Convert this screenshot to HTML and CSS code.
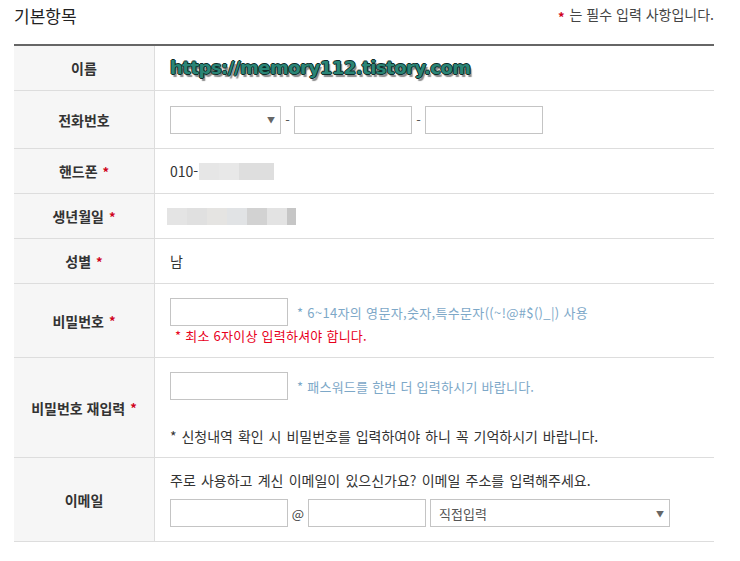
FILE: index.html
```html
<!DOCTYPE html>
<html lang="ko">
<head>
<meta charset="utf-8">
<title>기본항목</title>
<link rel="stylesheet" href="styles.css">
</head>
<body>
<div class="wrap">
  <div class="head">
    <h2 class="title">기본항목</h2>
    <p class="note"><span class="req">*</span> 는 필수 입력 사항입니다.</p>
  </div>
  <div class="form">
    <div class="row r-name">
      <div class="label">이름</div>
      <div class="value"><span class="wm">https://memory112.tistory.com</span></div>
    </div>
    <div class="row r-tel">
      <div class="label">전화번호</div>
      <div class="value">
        <div class="line">
          <div class="sel sel-tel"><span></span><span class="arrow">▼</span></div>
          <span class="dash">-</span>
          <div class="inp"></div>
          <span class="dash">-</span>
          <div class="inp"></div>
        </div>
      </div>
    </div>
    <div class="row r-short">
      <div class="label">핸드폰<span class="req">*</span></div>
      <div class="value"><div class="line"><span class="txt">010-</span><span class="blur blur-phone"></span></div></div>
    </div>
    <div class="row r-short">
      <div class="label">생년월일<span class="req">*</span></div>
      <div class="value"><div class="line"><span class="blur blur-birth"></span></div></div>
    </div>
    <div class="row r-short">
      <div class="label">성별<span class="req">*</span></div>
      <div class="value"><span class="txt">남</span></div>
    </div>
    <div class="row r-pw">
      <div class="label">비밀번호<span class="req">*</span></div>
      <div class="value top">
        <div class="line">
          <div class="inp"></div>
          <span class="hint hint1">* 6~14자의 영문자,숫자,특수문자((~!@#$()_|) 사용</span>
        </div>
        <p class="warn">* 최소 6자이상 입력하셔야 합니다.</p>
      </div>
    </div>
    <div class="row r-pw2">
      <div class="label">비밀번호 재입력<span class="req">*</span></div>
      <div class="value top">
        <div class="line">
          <div class="inp"></div>
          <span class="hint hint2">* 패스워드를 한번 더 입력하시기 바랍니다.</span>
        </div>
        <p class="memo">* 신청내역 확인 시 비밀번호를 입력하여야 하니 꼭 기억하시기 바랍니다.</p>
      </div>
    </div>
    <div class="row r-mail">
      <div class="label">이메일</div>
      <div class="value top mail">
        <p class="desc">주로 사용하고 계신 이메일이 있으신가요? 이메일 주소를 입력해주세요.</p>
        <div class="line mail-line">
          <div class="inp"></div>
          <span class="at">@</span>
          <div class="inp"></div>
          <div class="sel sel-mail"><span>직접입력</span><span class="arrow">▼</span></div>
        </div>
      </div>
    </div>
  </div>
</div>
</body>
</html>
```

FILE: styles.css
```css
* { box-sizing: border-box; }

body {
  margin: 0;
  background: #fff;
  color: #333;
  font-family: "Noto Sans CJK KR", "Noto Sans", sans-serif;
}

.wrap {
  width: 700px;
  margin-left: 14px;
}

.head {
  display: flex;
  justify-content: space-between;
  align-items: flex-start;
  height: 44px;
}

.title {
  margin: 0;
  font-size: 17px;
  font-weight: 400;
  line-height: 31px;
  color: #222;
}

.note {
  margin: 0;
  font-size: 14px;
  line-height: 28px;
  color: #444;
}

.req {
  color: #d0021b;
  font-weight: 700;
  font-size: 13px;
  margin-left: 5px;
  vertical-align: -2px;
}

.note .req {
  margin-left: 0;
  margin-right: 1px;
}

.form {
  border-top: 2px solid #666;
}

.row {
  display: flex;
  border-bottom: 1px solid #ddd;
}

.r-name { height: 45px; }
.r-tel { height: 58px; }
.r-short { height: 45px; }
.r-pw { height: 74px; }
.r-pw2 { height: 100px; }
.r-mail { height: 84px; }

.label {
  flex: none;
  width: 141px;
  background: #f6f6f6;
  border-right: 1px solid #ddd;
  display: flex;
  align-items: center;
  justify-content: center;
  font-size: 14px;
  font-weight: 700;
  color: #333;
}

.value {
  flex: 1;
  padding-left: 15px;
  display: flex;
  flex-direction: column;
  justify-content: center;
  font-size: 14px;
}

.value.top {
  justify-content: flex-start;
  padding-top: 14px;
}

.value.mail {
  padding-top: 13px;
}

.line {
  display: flex;
  align-items: center;
}

.wm {
  font-family: "DejaVu Sans", sans-serif;
  font-weight: 700;
  font-size: 18px;
  letter-spacing: -0.5px;
  color: #2a8576;
  text-shadow: -1px 0 #0f2c28, 1px 0 #0f2c28, 0 -1px #0f2c28, 0 1px #0f2c28, 2px 3px 1px #8a8a8a;
  line-height: 24px;
}

.txt {
  color: #333;
  font-size: 14px;
}

.inp {
  width: 118px;
  height: 28px;
  border: 1px solid #c4c4c4;
  background: #fff;
}

.sel {
  height: 28px;
  border: 1px solid #c4c4c4;
  background: #fff;
  display: flex;
  align-items: center;
  justify-content: space-between;
  padding: 0 5px 0 8px;
  font-size: 13px;
  color: #555;
}

.sel-tel { width: 111px; }
.sel-mail { width: 240px; margin-left: 4px; }

.arrow {
  font-size: 8px;
  color: #666;
}

.dash {
  width: 13px;
  text-align: center;
  font-size: 13px;
  color: #555;
}

.blur-phone {
  display: inline-block;
  width: 75px;
  height: 17px;
  margin-left: 1px;
  background: linear-gradient(90deg, #e6e6e6 0 20px, #e8e8e8 20px 40px, #dedede 40px 75px);
}

.blur-birth {
  display: inline-block;
  width: 129px;
  height: 17px;
  margin-left: -3px;
  background: linear-gradient(90deg, #e4e4e4 0 20px, #e0e0e0 20px 40px, #e5e4e2 40px 60px, #e1e3e5 60px 80px, #d2d2d2 80px 100px, #e3e3e3 100px 120px, #c6c6c6 120px 129px);
}

.hint {
  margin-left: 9px;
  font-size: 13px;
  color: #7da8c8;
}

.hint1 { letter-spacing: 0.33px; }
.hint2 { letter-spacing: 0.25px; }

.warn {
  margin: 1px 0 0 5px;
  font-size: 13px;
  line-height: 18px;
  letter-spacing: 0.25px;
  color: #e8001c;
}

.memo {
  margin: 27px 0 0;
  font-size: 14px;
  line-height: 18px;
  word-spacing: 1px;
  color: #333;
}

.desc {
  margin: 0;
  font-size: 14px;
  line-height: 18px;
  word-spacing: 1.3px;
  color: #333;
}

.mail-line {
  margin-top: 10px;
}

.at {
  width: 20px;
  text-align: center;
  font-size: 13px;
  color: #444;
}
```
